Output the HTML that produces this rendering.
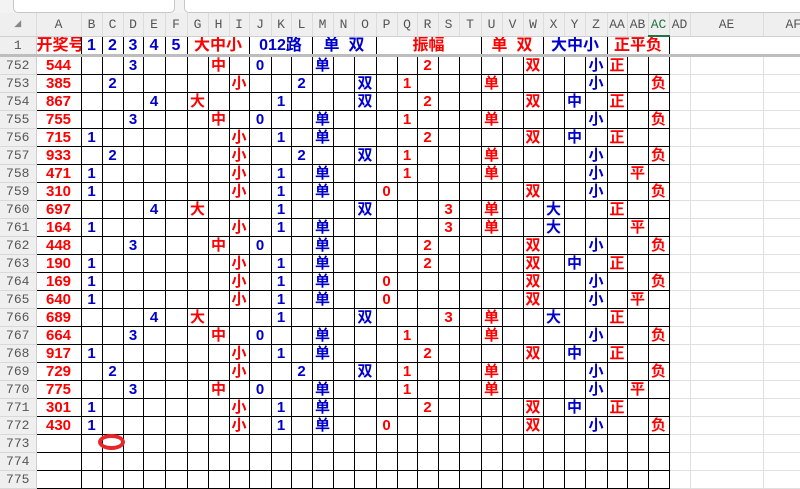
<!DOCTYPE html>
<html><head><meta charset="utf-8">
<style>
body{margin:0;width:800px;height:488px;overflow:hidden;background:#fff;position:relative;font-family:"Liberation Sans","Noto Sans CJK SC",sans-serif}
.top{position:absolute;left:0;top:0;width:800px;height:13px;background:#f3f3f3}
.box{position:absolute;top:-5px;height:16px;background:#fff;border:1px solid #c8c8c8;border-radius:0 0 5px 5px}
table{position:absolute;left:0;top:13px;border-collapse:collapse;table-layout:fixed;width:823px}
td,th{padding:0;height:17px;text-align:center;overflow:hidden;white-space:nowrap;font-weight:bold;font-size:15px;line-height:17px}
thead th{height:22px;background:#efefef;font-family:"Liberation Mono",monospace;font-weight:normal;color:#555;font-size:13px;border-right:1px solid #dcdcdc;border-bottom:1px solid #d0d0d0}
thead th.c{font-size:9px;color:#888}
tbody th{background:#efefef;font-family:"Liberation Mono",monospace;font-weight:normal;color:#555;font-size:13px;border-bottom:1px solid #d8d8d8;border-right:1px solid #d0d0d0}
tbody td{border:1px solid #000}
tbody td.g{border:1px solid #e0e0e0}
tr.h td{border:none;border-bottom:3px solid #bdbdbd;font-size:16px}
tr.h td.bl{border-left:1px solid #000}
td:nth-child(2){color:#f00;font-size:15px}
td:nth-child(n+3):nth-child(-n+7){color:#00c}
td:nth-child(n+8):nth-child(-n+10){color:#f00}
td:nth-child(n+11):nth-child(-n+16){color:#00c}
td:nth-child(n+17):nth-child(-n+24){color:#f00}
td:nth-child(n+25):nth-child(-n+27){color:#00c}
td:nth-child(n+28):nth-child(-n+30){color:#f00}
.sel{color:#217346!important;border-bottom:2px solid #217346!important}
.oval{position:absolute;left:98px;top:434px;width:19px;height:8px;border:4px solid #e8262a;border-radius:50%}
</style></head><body>
<div class="top"><div class="box" style="left:13px;width:160px"></div><div class="box" style="left:184px;width:640px"></div></div>
<table>
<colgroup><col style="width:36px"><col style="width:45px"><col style="width:21px"><col style="width:21px"><col style="width:20px"><col style="width:22px"><col style="width:22px"><col style="width:21px"><col style="width:21px"><col style="width:20px"><col style="width:22px"><col style="width:20px"><col style="width:21px"><col style="width:21px"><col style="width:21px"><col style="width:22px"><col style="width:21px"><col style="width:20px"><col style="width:21px"><col style="width:21px"><col style="width:22px"><col style="width:21px"><col style="width:21px"><col style="width:20px"><col style="width:21px"><col style="width:21px"><col style="width:22px"><col style="width:20px"><col style="width:21px"><col style="width:21px"><col style="width:21px"><col style="width:73px"><col style="width:60px"></colgroup>
<thead><tr><th class="c">◢</th><th>A</th><th>B</th><th>C</th><th>D</th><th>E</th><th>F</th><th>G</th><th>H</th><th>I</th><th>J</th><th>K</th><th>L</th><th>M</th><th>N</th><th>O</th><th>P</th><th>Q</th><th>R</th><th>S</th><th>T</th><th>U</th><th>V</th><th>W</th><th>X</th><th>Y</th><th>Z</th><th>AA</th><th>AB</th><th class="sel">AC</th><th>AD</th><th>AE</th><th style="text-align:left;padding-left:22px">AF</th></tr></thead>
<tbody>
<tr class="h"><th style="border-bottom:3px solid #bdbdbd">1</th><td>开奖号</td><td class="bl">1</td><td class="bl">2</td><td class="bl">3</td><td class="bl">4</td><td class="bl">5</td><td class="bl" colspan="3" style="color:#f00">大中小</td><td class="bl" colspan="3" style="color:#00c">012路</td><td class="bl" colspan="3" style="color:#00c">单&nbsp;&nbsp;双</td><td class="bl" colspan="5" style="color:#f00">振幅</td><td class="bl" colspan="3" style="color:#f00">单&nbsp;&nbsp;双</td><td class="bl" colspan="3" style="color:#00c">大中小</td><td class="bl" colspan="3" style="color:#f00;border-right:1px solid #000">正平负</td><td></td><td></td><td></td></tr>
<tr><th>752</th><td>544</td><td></td><td></td><td>3</td><td></td><td></td><td></td><td>中</td><td></td><td>0</td><td></td><td></td><td>单</td><td></td><td></td><td></td><td></td><td>2</td><td></td><td></td><td></td><td></td><td>双</td><td></td><td></td><td>小</td><td>正</td><td></td><td></td><td class="g"></td><td class="g"></td><td class="g"></td></tr>
<tr><th>753</th><td>385</td><td></td><td>2</td><td></td><td></td><td></td><td></td><td></td><td>小</td><td></td><td></td><td>2</td><td></td><td></td><td>双</td><td></td><td>1</td><td></td><td></td><td></td><td>单</td><td></td><td></td><td></td><td></td><td>小</td><td></td><td></td><td>负</td><td class="g"></td><td class="g"></td><td class="g"></td></tr>
<tr><th>754</th><td>867</td><td></td><td></td><td></td><td>4</td><td></td><td>大</td><td></td><td></td><td></td><td>1</td><td></td><td></td><td></td><td>双</td><td></td><td></td><td>2</td><td></td><td></td><td></td><td></td><td>双</td><td></td><td>中</td><td></td><td>正</td><td></td><td></td><td class="g"></td><td class="g"></td><td class="g"></td></tr>
<tr><th>755</th><td>755</td><td></td><td></td><td>3</td><td></td><td></td><td></td><td>中</td><td></td><td>0</td><td></td><td></td><td>单</td><td></td><td></td><td></td><td>1</td><td></td><td></td><td></td><td>单</td><td></td><td></td><td></td><td></td><td>小</td><td></td><td></td><td>负</td><td class="g"></td><td class="g"></td><td class="g"></td></tr>
<tr><th>756</th><td>715</td><td>1</td><td></td><td></td><td></td><td></td><td></td><td></td><td>小</td><td></td><td>1</td><td></td><td>单</td><td></td><td></td><td></td><td></td><td>2</td><td></td><td></td><td></td><td></td><td>双</td><td></td><td>中</td><td></td><td>正</td><td></td><td></td><td class="g"></td><td class="g"></td><td class="g"></td></tr>
<tr><th>757</th><td>933</td><td></td><td>2</td><td></td><td></td><td></td><td></td><td></td><td>小</td><td></td><td></td><td>2</td><td></td><td></td><td>双</td><td></td><td>1</td><td></td><td></td><td></td><td>单</td><td></td><td></td><td></td><td></td><td>小</td><td></td><td></td><td>负</td><td class="g"></td><td class="g"></td><td class="g"></td></tr>
<tr><th>758</th><td>471</td><td>1</td><td></td><td></td><td></td><td></td><td></td><td></td><td>小</td><td></td><td>1</td><td></td><td>单</td><td></td><td></td><td></td><td>1</td><td></td><td></td><td></td><td>单</td><td></td><td></td><td></td><td></td><td>小</td><td></td><td>平</td><td></td><td class="g"></td><td class="g"></td><td class="g"></td></tr>
<tr><th>759</th><td>310</td><td>1</td><td></td><td></td><td></td><td></td><td></td><td></td><td>小</td><td></td><td>1</td><td></td><td>单</td><td></td><td></td><td>0</td><td></td><td></td><td></td><td></td><td></td><td></td><td>双</td><td></td><td></td><td>小</td><td></td><td></td><td>负</td><td class="g"></td><td class="g"></td><td class="g"></td></tr>
<tr><th>760</th><td>697</td><td></td><td></td><td></td><td>4</td><td></td><td>大</td><td></td><td></td><td></td><td>1</td><td></td><td></td><td></td><td>双</td><td></td><td></td><td></td><td>3</td><td></td><td>单</td><td></td><td></td><td>大</td><td></td><td></td><td>正</td><td></td><td></td><td class="g"></td><td class="g"></td><td class="g"></td></tr>
<tr><th>761</th><td>164</td><td>1</td><td></td><td></td><td></td><td></td><td></td><td></td><td>小</td><td></td><td>1</td><td></td><td>单</td><td></td><td></td><td></td><td></td><td></td><td>3</td><td></td><td>单</td><td></td><td></td><td>大</td><td></td><td></td><td></td><td>平</td><td></td><td class="g"></td><td class="g"></td><td class="g"></td></tr>
<tr><th>762</th><td>448</td><td></td><td></td><td>3</td><td></td><td></td><td></td><td>中</td><td></td><td>0</td><td></td><td></td><td>单</td><td></td><td></td><td></td><td></td><td>2</td><td></td><td></td><td></td><td></td><td>双</td><td></td><td></td><td>小</td><td></td><td></td><td>负</td><td class="g"></td><td class="g"></td><td class="g"></td></tr>
<tr><th>763</th><td>190</td><td>1</td><td></td><td></td><td></td><td></td><td></td><td></td><td>小</td><td></td><td>1</td><td></td><td>单</td><td></td><td></td><td></td><td></td><td>2</td><td></td><td></td><td></td><td></td><td>双</td><td></td><td>中</td><td></td><td>正</td><td></td><td></td><td class="g"></td><td class="g"></td><td class="g"></td></tr>
<tr><th>764</th><td>169</td><td>1</td><td></td><td></td><td></td><td></td><td></td><td></td><td>小</td><td></td><td>1</td><td></td><td>单</td><td></td><td></td><td>0</td><td></td><td></td><td></td><td></td><td></td><td></td><td>双</td><td></td><td></td><td>小</td><td></td><td></td><td>负</td><td class="g"></td><td class="g"></td><td class="g"></td></tr>
<tr><th>765</th><td>640</td><td>1</td><td></td><td></td><td></td><td></td><td></td><td></td><td>小</td><td></td><td>1</td><td></td><td>单</td><td></td><td></td><td>0</td><td></td><td></td><td></td><td></td><td></td><td></td><td>双</td><td></td><td></td><td>小</td><td></td><td>平</td><td></td><td class="g"></td><td class="g"></td><td class="g"></td></tr>
<tr><th>766</th><td>689</td><td></td><td></td><td></td><td>4</td><td></td><td>大</td><td></td><td></td><td></td><td>1</td><td></td><td></td><td></td><td>双</td><td></td><td></td><td></td><td>3</td><td></td><td>单</td><td></td><td></td><td>大</td><td></td><td></td><td>正</td><td></td><td></td><td class="g"></td><td class="g"></td><td class="g"></td></tr>
<tr><th>767</th><td>664</td><td></td><td></td><td>3</td><td></td><td></td><td></td><td>中</td><td></td><td>0</td><td></td><td></td><td>单</td><td></td><td></td><td></td><td>1</td><td></td><td></td><td></td><td>单</td><td></td><td></td><td></td><td></td><td>小</td><td></td><td></td><td>负</td><td class="g"></td><td class="g"></td><td class="g"></td></tr>
<tr><th>768</th><td>917</td><td>1</td><td></td><td></td><td></td><td></td><td></td><td></td><td>小</td><td></td><td>1</td><td></td><td>单</td><td></td><td></td><td></td><td></td><td>2</td><td></td><td></td><td></td><td></td><td>双</td><td></td><td>中</td><td></td><td>正</td><td></td><td></td><td class="g"></td><td class="g"></td><td class="g"></td></tr>
<tr><th>769</th><td>729</td><td></td><td>2</td><td></td><td></td><td></td><td></td><td></td><td>小</td><td></td><td></td><td>2</td><td></td><td></td><td>双</td><td></td><td>1</td><td></td><td></td><td></td><td>单</td><td></td><td></td><td></td><td></td><td>小</td><td></td><td></td><td>负</td><td class="g"></td><td class="g"></td><td class="g"></td></tr>
<tr><th>770</th><td>775</td><td></td><td></td><td>3</td><td></td><td></td><td></td><td>中</td><td></td><td>0</td><td></td><td></td><td>单</td><td></td><td></td><td></td><td>1</td><td></td><td></td><td></td><td>单</td><td></td><td></td><td></td><td></td><td>小</td><td></td><td>平</td><td></td><td class="g"></td><td class="g"></td><td class="g"></td></tr>
<tr><th>771</th><td>301</td><td>1</td><td></td><td></td><td></td><td></td><td></td><td></td><td>小</td><td></td><td>1</td><td></td><td>单</td><td></td><td></td><td></td><td></td><td>2</td><td></td><td></td><td></td><td></td><td>双</td><td></td><td>中</td><td></td><td>正</td><td></td><td></td><td class="g"></td><td class="g"></td><td class="g"></td></tr>
<tr><th>772</th><td>430</td><td>1</td><td></td><td></td><td></td><td></td><td></td><td></td><td>小</td><td></td><td>1</td><td></td><td>单</td><td></td><td></td><td>0</td><td></td><td></td><td></td><td></td><td></td><td></td><td>双</td><td></td><td></td><td>小</td><td></td><td></td><td>负</td><td class="g"></td><td class="g"></td><td class="g"></td></tr>
<tr><th>773</th><td></td><td></td><td></td><td></td><td></td><td></td><td></td><td></td><td></td><td></td><td></td><td></td><td></td><td></td><td></td><td></td><td></td><td></td><td></td><td></td><td></td><td></td><td></td><td></td><td></td><td></td><td></td><td></td><td></td><td class="g"></td><td class="g"></td><td class="g"></td></tr>
<tr><th>774</th><td></td><td></td><td></td><td></td><td></td><td></td><td></td><td></td><td></td><td></td><td></td><td></td><td></td><td></td><td></td><td></td><td></td><td></td><td></td><td></td><td></td><td></td><td></td><td></td><td></td><td></td><td></td><td></td><td></td><td class="g"></td><td class="g"></td><td class="g"></td></tr>
<tr><th>775</th><td></td><td></td><td></td><td></td><td></td><td></td><td></td><td></td><td></td><td></td><td></td><td></td><td></td><td></td><td></td><td></td><td></td><td></td><td></td><td></td><td></td><td></td><td></td><td></td><td></td><td></td><td></td><td></td><td></td><td class="g"></td><td class="g"></td><td class="g"></td></tr>
</tbody></table>
<div class="oval"></div>
</body></html>
